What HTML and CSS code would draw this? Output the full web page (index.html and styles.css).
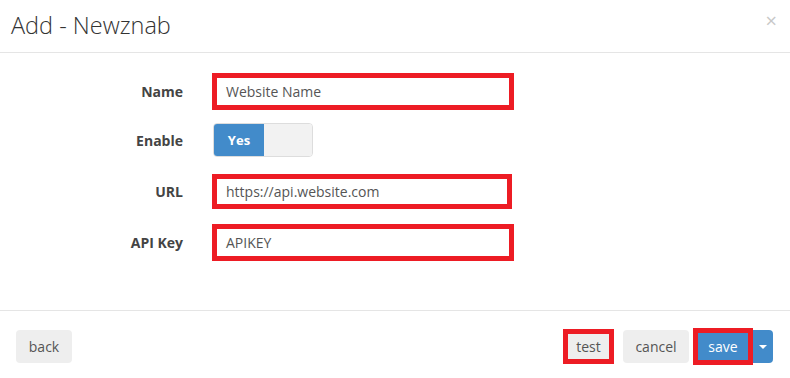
FILE: index.html
```html
<!DOCTYPE html>
<html lang="en">
<head>
   <meta charset="UTF-8">
   <title>Add - Newznab</title>
   <link rel="stylesheet" href="styles.css">
</head>
<body>
   <div class="modal">
      <div class="modal-header flex align-center justif-between">
         <h3>Add - Newznab</h3>
         <span class="close">&times;</span>
      </div>

      <form class="modal-body flex column">
         <div class="row-form flex align-center">
            <label>Name</label>
            <div class="field marked"><span>Website Name</span></div>
         </div>
         <div class="row-form flex align-center toggle-row">
            <label>Enable</label>
            <div class="toggle flex">
               <span class="on">Yes</span>
               <span class="off"></span>
            </div>
         </div>
         <div class="row-form flex align-center">
            <label>URL</label>
            <div class="field marked short"><span>https://api.website.com</span></div>
         </div>
         <div class="row-form flex align-center">
            <label>API Key</label>
            <div class="field marked"><span>APIKEY</span></div>
         </div>
      </form>

      <div class="modal-footer flex align-center justif-between">
         <button class="btn back">back</button>
         <div class="flex align-center">
            <button class="btn marked-btn test">test</button>
            <button class="btn cancel">cancel</button>
            <div class="split flex align-center">
               <button class="btn primary marked-btn save">save</button>
               <button class="btn primary caret-btn"><span class="caret"></span></button>
            </div>
         </div>
      </div>
   </div>
</body>
</html>
```

FILE: styles.css
```css
/** Commun */
* { padding: 0;
    margin: 0;
    box-sizing: border-box;
    font-family: "Open Sans", "Liberation Sans", sans-serif;
}

.flex { display: flex;}
.column { flex-direction: column;}
.justif-between { justify-content: space-between;}
.align-center { align-items: center;}

body {
   background: white;
   color: #555;
   width: 790px;
   height: 378px;
   overflow: hidden;
}

.modal-header {
   height: 53px;
   padding: 0 11px 0 11px;
   border-bottom: 1px solid #e5e5e5;
}
h3 {
   font-size: 23.5px;
   font-weight: 300;
   color: #333;
   margin-top: -3px;
}
.close {
   font-size: 20px;
   color: #c8c8c8;
   margin-top: -12px;
   margin-right: 2px;
}

/** Formulaire */
.modal-body {
   padding: 20px 0 0 0;
   height: 257px;
   gap: 15px;
}
.row-form label {
   width: 183px;
   text-align: right;
   font-weight: bold;
   font-size: 14px;
   color: #444;
   margin-right: 29px;
}
.field {
   width: 302px;
   height: 37px;
   background: white;
   display: flex;
   align-items: center;
   font-size: 14px;
   color: #555;
}
.field.short { height: 35px; width: 300px; }
.marked {
   border: 5px solid #ed1c24;
   padding-left: 9px;
}
.toggle-row { margin: -2px 0 2px 0; }
.toggle {
   width: 100px;
   height: 34px;
   border: 1px solid #ddd;
   border-radius: 4px;
   overflow: hidden;
   margin-left: 1px;
}
.toggle .on {
   width: 50px;
   background: #428bca;
   color: white;
   font-weight: bold;
   font-size: 13px;
   display: flex;
   align-items: center;
   justify-content: center;
}
.toggle .off {
   flex: 1;
   background: #f2f2f2;
}

/** Pied */
.modal-footer {
   border-top: 1px solid #e5e5e5;
   padding: 4px 17px 0 16px;
   height: 68px;
}
.btn {
   border: none;
   background: #eee;
   color: #555;
   font-size: 14px;
   height: 33px;
   padding: 0;
   border-radius: 4px;
   cursor: pointer;
   text-align: center;
}
.back { width: 56px; }
.cancel { width: 66px; margin-left: 9px; }
.marked-btn {
   border: 5px solid #ed1c24;
   border-radius: 0;
   height: 36px;
   margin-top: 0;
}
.test { width: 51px; height: 35px; }
.save { width: 60px; height: 37px; }
.split { margin-left: 4px; }
.btn.primary {
   background: #428bca;
   color: white;
}
.caret-btn {
   width: 20px;
   border-radius: 0 4px 4px 0;
   display: flex;
   align-items: center;
   justify-content: center;
}
.caret {
   width: 0;
   height: 0;
   border-left: 4px solid transparent;
   border-right: 4px solid transparent;
   border-top: 4px solid white;
}
```
